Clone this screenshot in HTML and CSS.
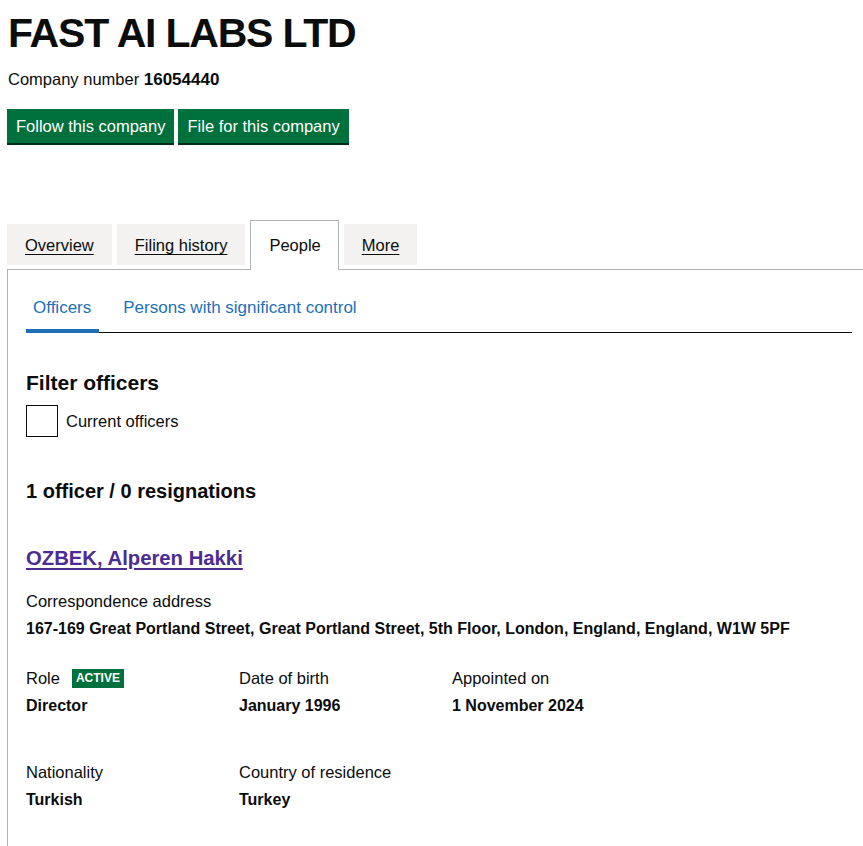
FILE: index.html
```html
<!DOCTYPE html>
<html>
  <head>
    <title>FAST AI LABS LTD people - Find and update company information</title>
    <meta name="viewport" content="width=device-width, initial-scale=1" />
    <link rel="stylesheet" href="styles.css">
  </head>
  <body>
    <main class="page">
      <h1 class="company-name">FAST AI LABS LTD</h1>
      <p class="company-number">Company number <strong>16054440</strong></p>
      <div class="actions">
        <a class="button" href="#">Follow this company</a>
        <a class="button" href="#">File for this company</a>
      </div>

      <ul class="tabs">
        <li class="tab"><a href="#">Overview</a></li>
        <li class="tab"><a href="#">Filing history</a></li>
        <li class="tab tab-active"><span>People</span></li>
        <li class="tab"><a href="#">More</a></li>
      </ul>

      <section class="panel">
        <ul class="subtabs">
          <li class="subtab subtab-active"><a href="#">Officers</a></li>
          <li class="subtab"><a href="#">Persons with significant control</a></li>
        </ul>

        <h2 class="filter-title">Filter officers</h2>
        <label class="checkbox">
          <span class="checkbox-box"></span>
          <span>Current officers</span>
        </label>

        <h2 class="officer-count">1 officer / 0 resignations</h2>

        <div class="appointment">
          <h2 class="officer-name"><a href="#">OZBEK, Alperen Hakki</a></h2>

          <dl class="field">
            <dt>Correspondence address</dt>
            <dd>167-169 Great Portland Street, Great Portland Street, 5th Floor, London, England, England, W1W 5PF</dd>
          </dl>

          <div class="field-grid">
            <dl class="field">
              <dt>Role <span class="tag">Active</span></dt>
              <dd>Director</dd>
            </dl>
            <dl class="field">
              <dt>Date of birth</dt>
              <dd>January 1996</dd>
            </dl>
            <dl class="field">
              <dt>Appointed on</dt>
              <dd>1 November 2024</dd>
            </dl>
          </div>

          <div class="field-grid field-grid-last">
            <dl class="field">
              <dt>Nationality</dt>
              <dd>Turkish</dd>
            </dl>
            <dl class="field">
              <dt>Country of residence</dt>
              <dd>Turkey</dd>
            </dl>
          </div>
        </div>
      </section>
    </main>
  </body>
</html>
```

FILE: styles.css
```css
html {
  overflow: hidden;
}

body {
  margin: 0;
  font-family: "Liberation Sans", Arial, sans-serif;
  font-size: 16.5px;
  line-height: 24px;
  color: #0b0c0c;
  background: #fff;
}

.page {
  width: 863px;
  padding: 0 0 0 7px;
}

.company-name {
  margin: 10px 0 0 1px;
  font-size: 41px;
  line-height: 46px;
  letter-spacing: -1.2px;
  font-weight: bold;
}

.company-number {
  height: 24px;
  margin: 11px 0 0 1px;
}

.company-number strong {
  font-size: 17px;
}

.actions {
  display: flex;
  gap: 4px;
  margin-top: 18px;
}

.button {
  display: inline-block;
  padding: 7px 9px;
  line-height: 20px;
  background-color: #00703c;
  box-shadow: 0 2px 0 #002d18;
  color: #fff;
  text-decoration: none;
}

.tabs {
  display: flex;
  align-items: flex-end;
  gap: 5px;
  margin: 77px 0 0;
  padding: 0;
  list-style: none;
}

.tab {
  padding: 9px 18px 8px;
  margin-bottom: 4px;
  background-color: #f3f2f1;
}

.tab a {
  color: #0b0c0c;
  text-decoration: underline;
  text-underline-offset: 3px;
}

.tab-active {
  position: relative;
  padding: 12px 17px 13px 18px;
  margin-bottom: -1px;
  border: 1px solid #b1b4b6;
  border-bottom: 0;
  background-color: #fff;
}

.panel {
  padding: 20px 18px 40px;
  border-top: 1px solid #b1b4b6;
  border-left: 1px solid #b1b4b6;
}

.subtabs {
  display: flex;
  gap: 17px;
  margin: 0;
  padding: 0;
  list-style: none;
  border-bottom: 1px solid #0b0c0c;
}

.subtab {
  padding: 6px 8px 9px 7px;
  margin-bottom: -1px;
  border-bottom: 4px solid transparent;
  font-size: 17px;
}

.subtab a {
  color: #1d70b8;
  text-decoration: none;
}

.subtab-active {
  border-bottom-color: #1d70b8;
}

.filter-title,
.officer-count {
  margin: 37px 0 0;
  font-size: 21px;
  line-height: 26px;
}

.officer-count {
  margin-top: 41px;
  font-size: 20px;
}

.checkbox {
  display: flex;
  align-items: center;
  gap: 8px;
  margin-top: 9px;
}

.checkbox-box {
  width: 30px;
  height: 30px;
  border: 1px solid #0b0c0c;
}

.officer-name {
  margin: 41px 0 0;
  font-size: 20.3px;
  line-height: 26px;
}

.officer-name a {
  color: #4c2c92;
  text-decoration: underline;
  text-underline-offset: 3px;
  text-decoration-thickness: 2px;
}

.field {
  margin: 18px 0 0;
}

.field dt {
  display: flex;
  align-items: center;
  gap: 12px;
}

.field dd {
  margin: 4px 0 0;
  font-size: 16px;
  font-weight: bold;
}

.field-grid {
  display: grid;
  grid-template-columns: repeat(3, 213px);
  margin-top: 7px;
}

.field-grid-last {
  margin-top: 24px;
}

.tag {
  display: inline-block;
  padding: 2px 4px;
  font-size: 12px;
  line-height: 15px;
  font-weight: bold;
  text-transform: uppercase;
  color: #fff;
  background-color: #00703c;
}
```
